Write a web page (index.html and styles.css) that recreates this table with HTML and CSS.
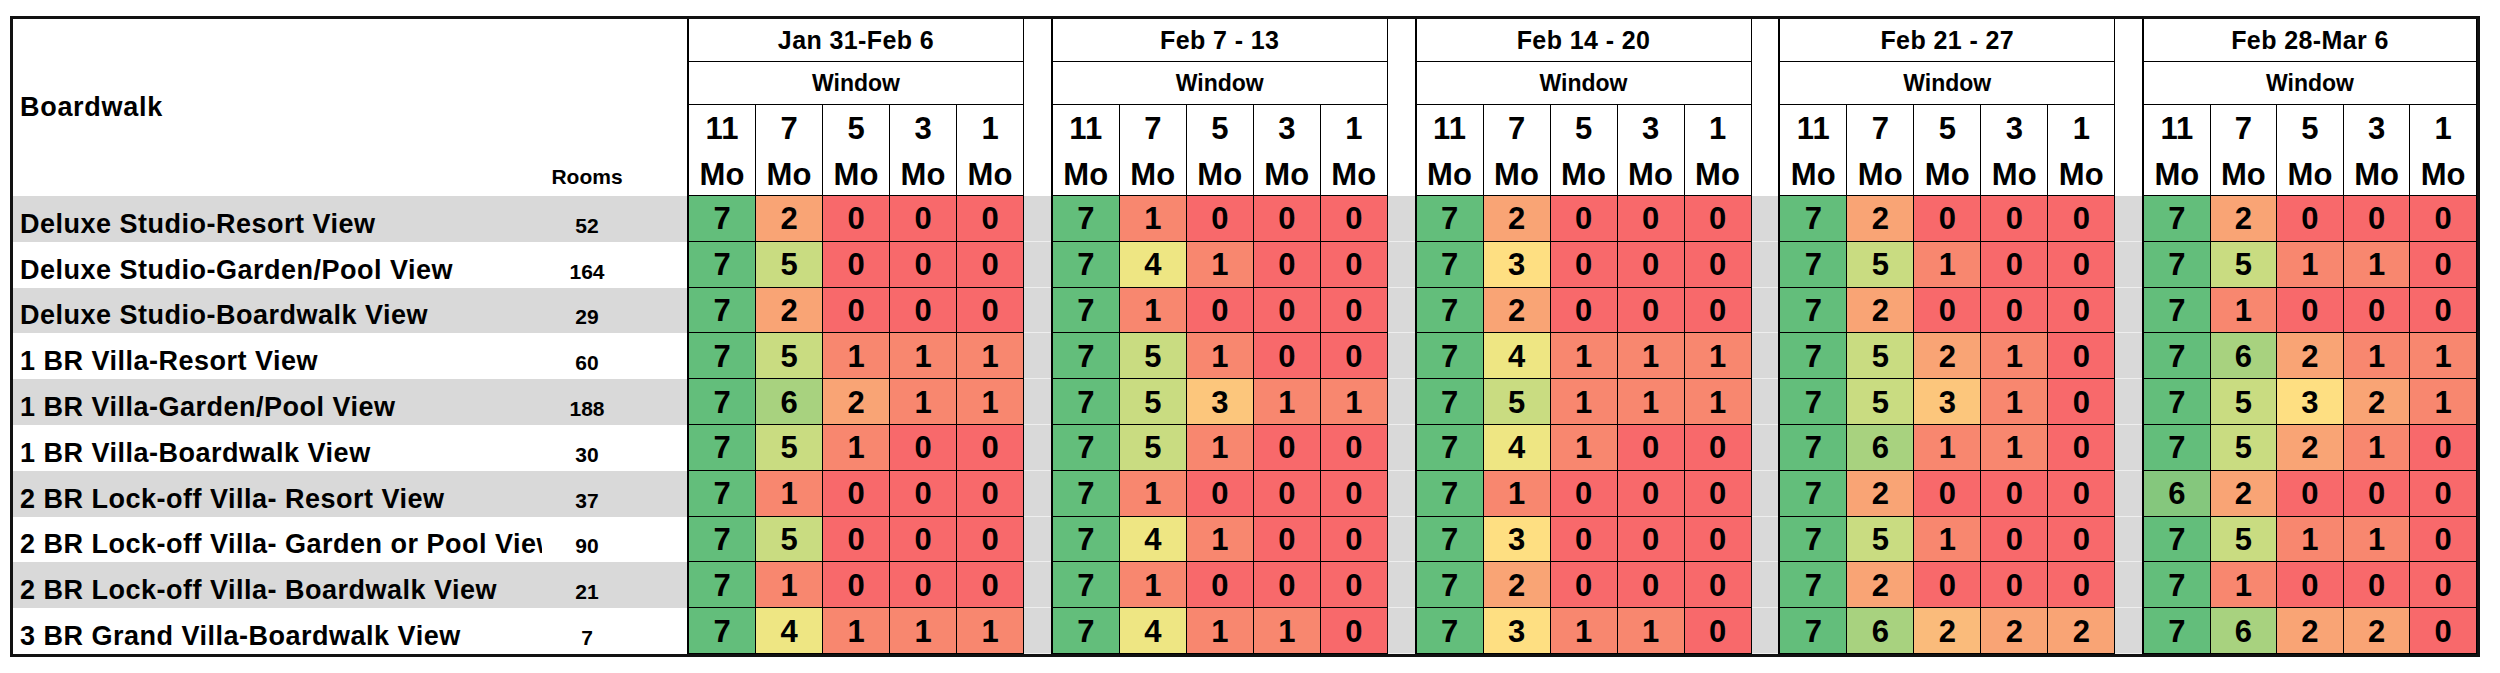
FILE: index.html
```html
<!DOCTYPE html>
<html lang="en">
<head>
<meta charset="utf-8">
<title>Boardwalk</title>
<link rel="stylesheet" href="styles.css">
</head>
<body>
<div class="sheet">
  <div class="labels">
    <div class="labels-head">
      <div class="lh-name">Boardwalk</div>
      <div class="lh-rooms">Rooms</div>
    </div>
    <div class="lrow alt"><span class="name">Deluxe Studio-Resort View</span><span class="rooms">52</span></div>
    <div class="lrow"><span class="name">Deluxe Studio-Garden/Pool View</span><span class="rooms">164</span></div>
    <div class="lrow alt"><span class="name">Deluxe Studio-Boardwalk View</span><span class="rooms">29</span></div>
    <div class="lrow"><span class="name">1 BR Villa-Resort View</span><span class="rooms">60</span></div>
    <div class="lrow alt"><span class="name">1 BR Villa-Garden/Pool View</span><span class="rooms">188</span></div>
    <div class="lrow"><span class="name">1 BR Villa-Boardwalk View</span><span class="rooms">30</span></div>
    <div class="lrow alt"><span class="name">2 BR Lock-off Villa- Resort View</span><span class="rooms">37</span></div>
    <div class="lrow"><span class="name">2 BR Lock-off Villa- Garden or Pool View</span><span class="rooms">90</span></div>
    <div class="lrow alt"><span class="name">2 BR Lock-off Villa- Boardwalk View</span><span class="rooms">21</span></div>
    <div class="lrow"><span class="name">3 BR Grand Villa-Boardwalk View</span><span class="rooms">7</span></div>
  </div>

  <section class="block">
    <div class="date">Jan 31-Feb 6</div>
    <div class="win">Window</div>
    <div class="months"><div class="m"><span>11</span><span>Mo</span></div><div class="m"><span>7</span><span>Mo</span></div><div class="m"><span>5</span><span>Mo</span></div><div class="m"><span>3</span><span>Mo</span></div><div class="m"><span>1</span><span>Mo</span></div></div>
    <div class="drow"><span class="d c7">7</span><span class="d c2">2</span><span class="d c0">0</span><span class="d c0">0</span><span class="d c0">0</span></div>
    <div class="drow"><span class="d c7">7</span><span class="d c5">5</span><span class="d c0">0</span><span class="d c0">0</span><span class="d c0">0</span></div>
    <div class="drow"><span class="d c7">7</span><span class="d c2">2</span><span class="d c0">0</span><span class="d c0">0</span><span class="d c0">0</span></div>
    <div class="drow"><span class="d c7">7</span><span class="d c5">5</span><span class="d c1">1</span><span class="d c1">1</span><span class="d c1">1</span></div>
    <div class="drow"><span class="d c7">7</span><span class="d c6">6</span><span class="d c2">2</span><span class="d c1">1</span><span class="d c1">1</span></div>
    <div class="drow"><span class="d c7">7</span><span class="d c5">5</span><span class="d c1">1</span><span class="d c0">0</span><span class="d c0">0</span></div>
    <div class="drow"><span class="d c7">7</span><span class="d c1">1</span><span class="d c0">0</span><span class="d c0">0</span><span class="d c0">0</span></div>
    <div class="drow"><span class="d c7">7</span><span class="d c5">5</span><span class="d c0">0</span><span class="d c0">0</span><span class="d c0">0</span></div>
    <div class="drow"><span class="d c7">7</span><span class="d c1">1</span><span class="d c0">0</span><span class="d c0">0</span><span class="d c0">0</span></div>
    <div class="drow"><span class="d c7">7</span><span class="d c4">4</span><span class="d c1">1</span><span class="d c1">1</span><span class="d c1">1</span></div>
  </section>
  <div class="gap"><div class="gap-head"></div><div class="g"></div><div class="g"></div><div class="g"></div><div class="g"></div><div class="g"></div><div class="g"></div><div class="g"></div><div class="g"></div><div class="g"></div><div class="g"></div></div>

  <section class="block">
    <div class="date">Feb 7 - 13</div>
    <div class="win">Window</div>
    <div class="months"><div class="m"><span>11</span><span>Mo</span></div><div class="m"><span>7</span><span>Mo</span></div><div class="m"><span>5</span><span>Mo</span></div><div class="m"><span>3</span><span>Mo</span></div><div class="m"><span>1</span><span>Mo</span></div></div>
    <div class="drow"><span class="d c7">7</span><span class="d c1">1</span><span class="d c0">0</span><span class="d c0">0</span><span class="d c0">0</span></div>
    <div class="drow"><span class="d c7">7</span><span class="d c4">4</span><span class="d c1">1</span><span class="d c0">0</span><span class="d c0">0</span></div>
    <div class="drow"><span class="d c7">7</span><span class="d c1">1</span><span class="d c0">0</span><span class="d c0">0</span><span class="d c0">0</span></div>
    <div class="drow"><span class="d c7">7</span><span class="d c5">5</span><span class="d c1">1</span><span class="d c0">0</span><span class="d c0">0</span></div>
    <div class="drow"><span class="d c7">7</span><span class="d c5">5</span><span class="d c3">3</span><span class="d c1">1</span><span class="d c1">1</span></div>
    <div class="drow"><span class="d c7">7</span><span class="d c5">5</span><span class="d c1">1</span><span class="d c0">0</span><span class="d c0">0</span></div>
    <div class="drow"><span class="d c7">7</span><span class="d c1">1</span><span class="d c0">0</span><span class="d c0">0</span><span class="d c0">0</span></div>
    <div class="drow"><span class="d c7">7</span><span class="d c4">4</span><span class="d c1">1</span><span class="d c0">0</span><span class="d c0">0</span></div>
    <div class="drow"><span class="d c7">7</span><span class="d c1">1</span><span class="d c0">0</span><span class="d c0">0</span><span class="d c0">0</span></div>
    <div class="drow"><span class="d c7">7</span><span class="d c4">4</span><span class="d c1">1</span><span class="d c1">1</span><span class="d c0">0</span></div>
  </section>
  <div class="gap"><div class="gap-head"></div><div class="g"></div><div class="g"></div><div class="g"></div><div class="g"></div><div class="g"></div><div class="g"></div><div class="g"></div><div class="g"></div><div class="g"></div><div class="g"></div></div>

  <section class="block">
    <div class="date">Feb 14 - 20</div>
    <div class="win">Window</div>
    <div class="months"><div class="m"><span>11</span><span>Mo</span></div><div class="m"><span>7</span><span>Mo</span></div><div class="m"><span>5</span><span>Mo</span></div><div class="m"><span>3</span><span>Mo</span></div><div class="m"><span>1</span><span>Mo</span></div></div>
    <div class="drow"><span class="d c7">7</span><span class="d c2">2</span><span class="d c0">0</span><span class="d c0">0</span><span class="d c0">0</span></div>
    <div class="drow"><span class="d c7">7</span><span class="d c3y">3</span><span class="d c0">0</span><span class="d c0">0</span><span class="d c0">0</span></div>
    <div class="drow"><span class="d c7">7</span><span class="d c2">2</span><span class="d c0">0</span><span class="d c0">0</span><span class="d c0">0</span></div>
    <div class="drow"><span class="d c7">7</span><span class="d c4">4</span><span class="d c1">1</span><span class="d c1">1</span><span class="d c1">1</span></div>
    <div class="drow"><span class="d c7">7</span><span class="d c5">5</span><span class="d c1">1</span><span class="d c1">1</span><span class="d c1">1</span></div>
    <div class="drow"><span class="d c7">7</span><span class="d c4">4</span><span class="d c1">1</span><span class="d c0">0</span><span class="d c0">0</span></div>
    <div class="drow"><span class="d c7">7</span><span class="d c1">1</span><span class="d c0">0</span><span class="d c0">0</span><span class="d c0">0</span></div>
    <div class="drow"><span class="d c7">7</span><span class="d c3y">3</span><span class="d c0">0</span><span class="d c0">0</span><span class="d c0">0</span></div>
    <div class="drow"><span class="d c7">7</span><span class="d c2">2</span><span class="d c0">0</span><span class="d c0">0</span><span class="d c0">0</span></div>
    <div class="drow"><span class="d c7">7</span><span class="d c3y">3</span><span class="d c1">1</span><span class="d c1">1</span><span class="d c0">0</span></div>
  </section>
  <div class="gap"><div class="gap-head"></div><div class="g"></div><div class="g"></div><div class="g"></div><div class="g"></div><div class="g"></div><div class="g"></div><div class="g"></div><div class="g"></div><div class="g"></div><div class="g"></div></div>

  <section class="block">
    <div class="date">Feb 21 - 27</div>
    <div class="win">Window</div>
    <div class="months"><div class="m"><span>11</span><span>Mo</span></div><div class="m"><span>7</span><span>Mo</span></div><div class="m"><span>5</span><span>Mo</span></div><div class="m"><span>3</span><span>Mo</span></div><div class="m"><span>1</span><span>Mo</span></div></div>
    <div class="drow"><span class="d c7">7</span><span class="d c2">2</span><span class="d c0">0</span><span class="d c0">0</span><span class="d c0">0</span></div>
    <div class="drow"><span class="d c7">7</span><span class="d c5">5</span><span class="d c1">1</span><span class="d c0">0</span><span class="d c0">0</span></div>
    <div class="drow"><span class="d c7">7</span><span class="d c2">2</span><span class="d c0">0</span><span class="d c0">0</span><span class="d c0">0</span></div>
    <div class="drow"><span class="d c7">7</span><span class="d c5">5</span><span class="d c2">2</span><span class="d c1">1</span><span class="d c0">0</span></div>
    <div class="drow"><span class="d c7">7</span><span class="d c5">5</span><span class="d c3">3</span><span class="d c1">1</span><span class="d c0">0</span></div>
    <div class="drow"><span class="d c7">7</span><span class="d c6">6</span><span class="d c1">1</span><span class="d c1">1</span><span class="d c0">0</span></div>
    <div class="drow"><span class="d c7">7</span><span class="d c2">2</span><span class="d c0">0</span><span class="d c0">0</span><span class="d c0">0</span></div>
    <div class="drow"><span class="d c7">7</span><span class="d c5">5</span><span class="d c1">1</span><span class="d c0">0</span><span class="d c0">0</span></div>
    <div class="drow"><span class="d c7">7</span><span class="d c2">2</span><span class="d c0">0</span><span class="d c0">0</span><span class="d c0">0</span></div>
    <div class="drow"><span class="d c7">7</span><span class="d c6">6</span><span class="d c2l">2</span><span class="d c2">2</span><span class="d c2">2</span></div>
  </section>
  <div class="gap"><div class="gap-head"></div><div class="g"></div><div class="g"></div><div class="g"></div><div class="g"></div><div class="g"></div><div class="g"></div><div class="g"></div><div class="g"></div><div class="g"></div><div class="g"></div></div>

  <section class="block last">
    <div class="date">Feb 28-Mar 6</div>
    <div class="win">Window</div>
    <div class="months"><div class="m"><span>11</span><span>Mo</span></div><div class="m"><span>7</span><span>Mo</span></div><div class="m"><span>5</span><span>Mo</span></div><div class="m"><span>3</span><span>Mo</span></div><div class="m"><span>1</span><span>Mo</span></div></div>
    <div class="drow"><span class="d c7">7</span><span class="d c2">2</span><span class="d c0">0</span><span class="d c0">0</span><span class="d c0">0</span></div>
    <div class="drow"><span class="d c7">7</span><span class="d c5">5</span><span class="d c1">1</span><span class="d c1">1</span><span class="d c0">0</span></div>
    <div class="drow"><span class="d c7">7</span><span class="d c1">1</span><span class="d c0">0</span><span class="d c0">0</span><span class="d c0">0</span></div>
    <div class="drow"><span class="d c7">7</span><span class="d c6">6</span><span class="d c2">2</span><span class="d c1">1</span><span class="d c1">1</span></div>
    <div class="drow"><span class="d c7">7</span><span class="d c5">5</span><span class="d c3y">3</span><span class="d c2">2</span><span class="d c1">1</span></div>
    <div class="drow"><span class="d c7">7</span><span class="d c5">5</span><span class="d c2">2</span><span class="d c1">1</span><span class="d c0">0</span></div>
    <div class="drow"><span class="d c6g">6</span><span class="d c2">2</span><span class="d c0">0</span><span class="d c0">0</span><span class="d c0">0</span></div>
    <div class="drow"><span class="d c7">7</span><span class="d c5">5</span><span class="d c1">1</span><span class="d c1">1</span><span class="d c0">0</span></div>
    <div class="drow"><span class="d c7">7</span><span class="d c1">1</span><span class="d c0">0</span><span class="d c0">0</span><span class="d c0">0</span></div>
    <div class="drow"><span class="d c7">7</span><span class="d c6">6</span><span class="d c2">2</span><span class="d c2">2</span><span class="d c0">0</span></div>
  </section>
</div>
</body>
</html>
```

FILE: styles.css
```css
html, body {
  margin: 0;
  padding: 0;
  background: #ffffff;
}

.sheet {
  display: flex;
  box-sizing: border-box;
  width: 2470px;
  height: 641px;
  margin: 16px 0 0 10px;
  border: 3px solid #111111;
  font-family: "Liberation Sans", Arial, sans-serif;
  font-weight: bold;
  color: #000000;
}

/* ---------- left label panel ---------- */
.labels {
  flex: none;
  width: 674px;
  display: flex;
  flex-direction: column;
}

.labels-head {
  height: 177px;
  display: flex;
  flex: none;
}

.lh-name {
  width: 529px;
  box-sizing: border-box;
  padding-left: 7px;
  display: flex;
  align-items: center;
  font-size: 27px;
  letter-spacing: 0.7px;
}

.lh-rooms {
  width: 90px;
  box-sizing: border-box;
  display: flex;
  align-items: flex-end;
  justify-content: center;
  padding-bottom: 7px;
  font-size: 21px;
  line-height: 24px;
}

.lrow {
  flex: none;
  height: 45.8px;
  display: flex;
  align-items: flex-end;
  background: #ffffff;
}

.lrow.alt {
  background: #d9d9d9;
}

.lrow .name {
  width: 529px;
  box-sizing: border-box;
  padding-left: 7px;
  padding-bottom: 2px;
  font-size: 27px;
  letter-spacing: 0.5px;
  line-height: 31px;
  white-space: nowrap;
  overflow: hidden;
}

.lrow .rooms {
  width: 90px;
  text-align: center;
  font-size: 21px;
  line-height: 24px;
  padding-bottom: 4px;
}

/* ---------- week blocks ---------- */
.block {
  flex: none;
  width: 337px;
  box-sizing: border-box;
  border-left: 2px solid #000000;
  display: flex;
  flex-direction: column;
}

.block.last {
  flex: 1;
  width: auto;
}

.date,
.win {
  flex: none;
  height: 43px;
  box-sizing: border-box;
  border-right: 1px solid #000000;
  border-bottom: 1px solid #000000;
  display: flex;
  align-items: center;
  justify-content: center;
}

.date {
  font-size: 25px;
  letter-spacing: 0.4px;
}

.win {
  font-size: 23px;
}

.months {
  flex: none;
  height: 91px;
  display: flex;
}

.m {
  flex: 1;
  min-width: 0;
  box-sizing: border-box;
  border-right: 1px solid #000000;
  border-bottom: 1px solid #000000;
  padding-top: 1px;
  text-align: center;
  font-size: 31px;
  line-height: 46px;
}

.m span {
  display: block;
}

.drow {
  flex: none;
  height: 45.8px;
  display: flex;
}

.d {
  flex: 1;
  min-width: 0;
  box-sizing: border-box;
  border-right: 1px solid #000000;
  border-bottom: 1px solid #000000;
  display: flex;
  align-items: center;
  justify-content: center;
  padding-top: 2px;
  font-size: 31px;
}

/* ---------- separator columns ---------- */
.gap {
  flex: none;
  width: 26.75px;
  display: flex;
  flex-direction: column;
}

.gap-head {
  flex: none;
  height: 177px;
  background: #ffffff;
}

.g {
  flex: none;
  height: 45.8px;
  box-sizing: border-box;
  background: #d9d9d9;
  border-bottom: 1px solid #eeeeee;
}

/* ---------- colour scale ---------- */
.c0 { background: #f8696b; }
.c1 { background: #f8876f; }
.c2 { background: #f9a475; }
.c2l { background: #fabb7b; }
.c3 { background: #fcc67c; }
.c3y { background: #fedf82; }
.c4 { background: #eee683; }
.c5 { background: #c9dc81; }
.c6 { background: #a8d27f; }
.c6g { background: #85c77d; }
.c7 { background: #63be7b; }
```
